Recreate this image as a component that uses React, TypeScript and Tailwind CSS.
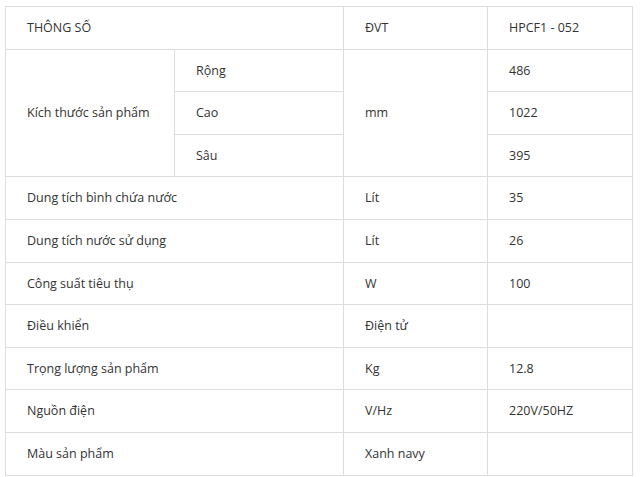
type Row = { label: string; unit?: string; value: string };

const ROWS: Row[] = [
  { label: 'Dung tích bình chứa nước', unit: 'Lít', value: '35' },
  { label: 'Dung tích nước sử dụng', unit: 'Lít', value: '26' },
  { label: 'Công suất tiêu thụ', unit: 'W', value: '100' },
  { label: 'Điều khiển', unit: 'Điện tử', value: '' },
  { label: 'Trọng lượng sản phẩm', unit: 'Kg', value: '12.8' },
  { label: 'Nguồn điện', unit: 'V/Hz', value: '220V/50HZ' },
  { label: 'Màu sản phẩm', unit: 'Xanh navy', value: '' },
];

const SIZES = [
  { name: 'Rộng', value: '486' },
  { name: 'Cao', value: '1022' },
  { name: 'Sâu', value: '395' },
];

const td = 'border border-[#dddddd] pl-[21px] pr-2 py-3 align-middle';

export default function App() {
  return (
    <div
      className="bg-white min-h-[477px] pl-[5px] pt-[6px] text-[12.5px] leading-[17.6px] text-[#333333]"
      style={{ fontFamily: '"Open Sans", "Noto Sans", sans-serif' }}
    >
      <table className="w-[627px] table-fixed border-collapse border border-[#dddddd]">
        <colgroup>
          <col className="w-[169px]" />
          <col className="w-[169px]" />
          <col className="w-[144px]" />
          <col className="w-[145px]" />
        </colgroup>
        <tbody>
          <tr>
            <td className={td} colSpan={2}>THÔNG SỐ</td>
            <td className={td}>ĐVT</td>
            <td className={td}>HPCF1 - 052</td>
          </tr>
          {SIZES.map((s, i) => (
            <tr key={s.name}>
              {i === 0 && (
                <td className={td} rowSpan={3}>Kích thước sản phẩm</td>
              )}
              <td className={td}>{s.name}</td>
              {i === 0 && (
                <td className={td} rowSpan={3}>mm</td>
              )}
              <td className={td}>{s.value}</td>
            </tr>
          ))}
          {ROWS.map((r) => (
            <tr key={r.label}>
              <td className={td} colSpan={2}>{r.label}</td>
              <td className={td}>{r.unit}</td>
              <td className={td}>{r.value}</td>
            </tr>
          ))}
        </tbody>
      </table>
    </div>
  );
}
